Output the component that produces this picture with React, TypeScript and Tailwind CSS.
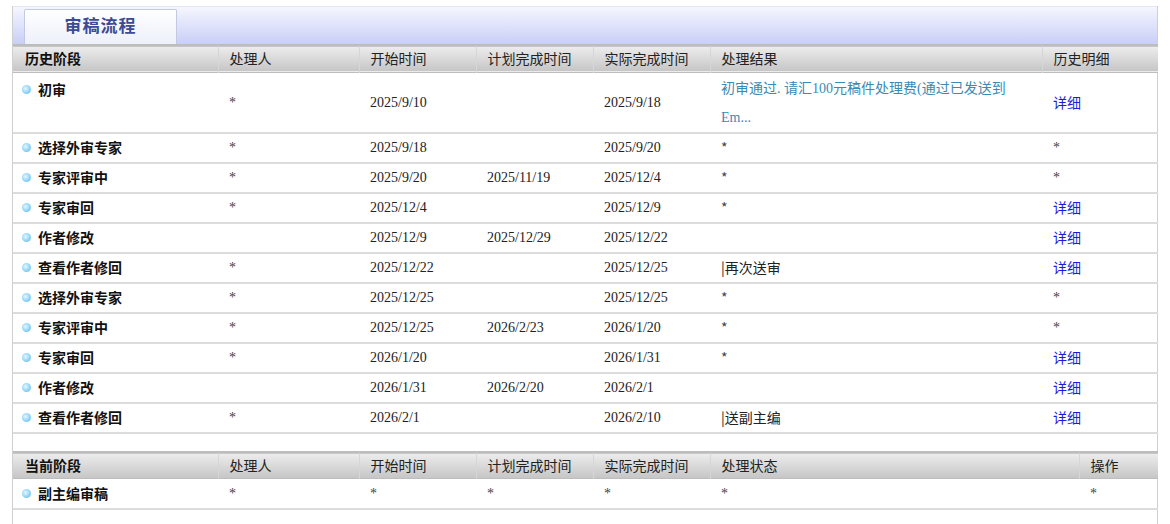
import React from "react";

type Row = {
  stage: string;
  handler: string;
  start: string;
  plan: string;
  actual: string;
  result: string;
  detail: string;
};

const history: Row[] = [
  { stage: "选择外审专家", handler: "*", start: "2025/9/18", plan: "", actual: "2025/9/20", result: "*", detail: "*" },
  { stage: "专家评审中", handler: "*", start: "2025/9/20", plan: "2025/11/19", actual: "2025/12/4", result: "*", detail: "*" },
  { stage: "专家审回", handler: "*", start: "2025/12/4", plan: "", actual: "2025/12/9", result: "*", detail: "详细" },
  { stage: "作者修改", handler: "", start: "2025/12/9", plan: "2025/12/29", actual: "2025/12/22", result: "", detail: "详细" },
  { stage: "查看作者修回", handler: "*", start: "2025/12/22", plan: "", actual: "2025/12/25", result: "|再次送审", detail: "详细" },
  { stage: "选择外审专家", handler: "*", start: "2025/12/25", plan: "", actual: "2025/12/25", result: "*", detail: "*" },
  { stage: "专家评审中", handler: "*", start: "2025/12/25", plan: "2026/2/23", actual: "2026/1/20", result: "*", detail: "*" },
  { stage: "专家审回", handler: "*", start: "2026/1/20", plan: "", actual: "2026/1/31", result: "*", detail: "详细" },
  { stage: "作者修改", handler: "", start: "2026/1/31", plan: "2026/2/20", actual: "2026/2/1", result: "", detail: "详细" },
  { stage: "查看作者修回", handler: "*", start: "2026/2/1", plan: "", actual: "2026/2/10", result: "|送副主编", detail: "详细" },
];

function Dot() {
  return (
    <span className="inline-block w-[9px] h-[9px] rounded-full bg-[radial-gradient(circle_at_40%_40%,#e6f7ff_0%,#8fd4f5_55%,#4fb0e0_100%)] mr-[7px] shrink-0" />
  );
}

function Stage({ name }: { name: string }) {
  return (
    <div className="flex items-center pl-[9px] font-bold text-[#111]">
      <Dot />
      <span>{name}</span>
    </div>
  );
}

const thBase = "text-left pl-[11px] h-[27px] border-r border-[#d6d6d6] text-[#222]";
const th = `${thBase} font-normal`;
const thFirst = "text-left pl-[12px] h-[27px] border-r border-[#d6d6d6] text-[#111] font-bold";
const td = "pl-[11px] align-middle";

function Cell({ v, className = "" }: { v: string; className?: string }) {
  const isStar = v === "*";
  return (
    <td className={`${td} ${className}`}>
      <span className={isStar ? "text-[#444] text-[14px]" : ""}>{v}</span>
    </td>
  );
}

export default function App() {
  return (
    <div className="w-[1170px] h-[524px] bg-white overflow-hidden pt-[6px] pl-[12px] font-['Liberation_Serif','Noto_Sans_CJK_SC',serif] text-[14px] text-[#222]">
      <div className="w-[1146px] h-[518px] border-l border-r border-[#cfcfcf]">
        {/* tab bar */}
        <div className="h-[38px] border-t border-[#e3e6f5] bg-[linear-gradient(#f5f6fe,#c9cff7)] flex items-end pl-[11px]">
          <div className="w-[153px] h-[35px] pb-[4px] border border-b-0 border-[#c3c9e2] rounded-t-[2px] bg-[linear-gradient(#ffffff,#eef0fb)] flex items-center justify-center font-['Noto_Sans_CJK_SC',sans-serif] font-bold text-[17px] tracking-[1px] text-[#3c4b94]">
            审稿流程
          </div>
        </div>

        <table className="w-[1145px] table-fixed border-collapse font-['Liberation_Serif','Noto_Sans_CJK_SC',serif]">
          <colgroup>
            <col className="w-[205px]" />
            <col className="w-[141px]" />
            <col className="w-[117px]" />
            <col className="w-[117px]" />
            <col className="w-[117px]" />
            <col className="w-[332px]" />
            <col className="w-[116px]" />
          </colgroup>
          <thead>
            <tr className="bg-[linear-gradient(#ececec,#c6c6c6)] border-t-2 border-[#b4b4b4] border-b border-[#bdbdbd] font-['Noto_Sans_CJK_SC',sans-serif]">
              <th className={thFirst}>历史阶段</th>
              <th className={th}>处理人</th>
              <th className={th}>开始时间</th>
              <th className={th}>计划完成时间</th>
              <th className={th}>实际完成时间</th>
              <th className={th}>处理结果</th>
              <th className={`${th} border-r-0`}>历史明细</th>
            </tr>
          </thead>
          <tbody>
            <tr className="h-[58px] border-b-2 border-[#dcdcdc]">
              <td className="align-top pt-[6px] font-['Noto_Sans_CJK_SC',sans-serif]">
                <Stage name="初审" />
              </td>
              <Cell v="*" />
              <Cell v="2025/9/10" />
              <Cell v="" />
              <Cell v="2025/9/18" />
              <td className="pl-[11px] align-top pt-[1px] text-[#3a8bb3] leading-[29px]">
                初审通过. 请汇100元稿件处理费(通过已发送到
                <br />
                Em...
              </td>
              <td className={`${td} text-[#1c1cd8] font-['Noto_Sans_CJK_SC',sans-serif]`}>详细</td>
            </tr>
            {history.map((r, i) => (
              <tr key={i} className="h-[30px] border-b-2 border-[#dcdcdc]">
                <td className="align-middle font-['Noto_Sans_CJK_SC',sans-serif]">
                  <Stage name={r.stage} />
                </td>
                <Cell v={r.handler} />
                <Cell v={r.start} />
                <Cell v={r.plan} />
                <Cell v={r.actual} />
                <Cell v={r.result} className="font-['Noto_Sans_CJK_SC',sans-serif]" />
                <Cell
                  v={r.detail}
                  className={r.detail === "详细" ? "text-[#1c1cd8] font-['Noto_Sans_CJK_SC',sans-serif]" : ""}
                />
              </tr>
            ))}
            <tr className="h-[18px]">
              <td colSpan={7} />
            </tr>
          </tbody>
        </table>

        <table className="w-[1145px] table-fixed border-collapse">
          <colgroup>
            <col className="w-[205px]" />
            <col className="w-[141px]" />
            <col className="w-[117px]" />
            <col className="w-[117px]" />
            <col className="w-[117px]" />
            <col className="w-[369px]" />
            <col className="w-[79px]" />
          </colgroup>
          <thead>
            <tr className="bg-[linear-gradient(#ececec,#c6c6c6)] border-t-2 border-[#b4b4b4] border-b border-[#bdbdbd] font-['Noto_Sans_CJK_SC',sans-serif]">
              <th className={thFirst}>当前阶段</th>
              <th className={th}>处理人</th>
              <th className={th}>开始时间</th>
              <th className={th}>计划完成时间</th>
              <th className={th}>实际完成时间</th>
              <th className={th}>处理状态</th>
              <th className={`${th} border-r-0`}>操作</th>
            </tr>
          </thead>
          <tbody>
            <tr className="h-[30px] border-b-2 border-[#dcdcdc]">
              <td className="align-middle font-['Noto_Sans_CJK_SC',sans-serif]">
                <Stage name="副主编审稿" />
              </td>
              <Cell v="*" />
              <Cell v="*" />
              <Cell v="*" />
              <Cell v="*" />
              <Cell v="*" />
              <Cell v="*" />
            </tr>
          </tbody>
        </table>
      </div>
    </div>
  );
}
